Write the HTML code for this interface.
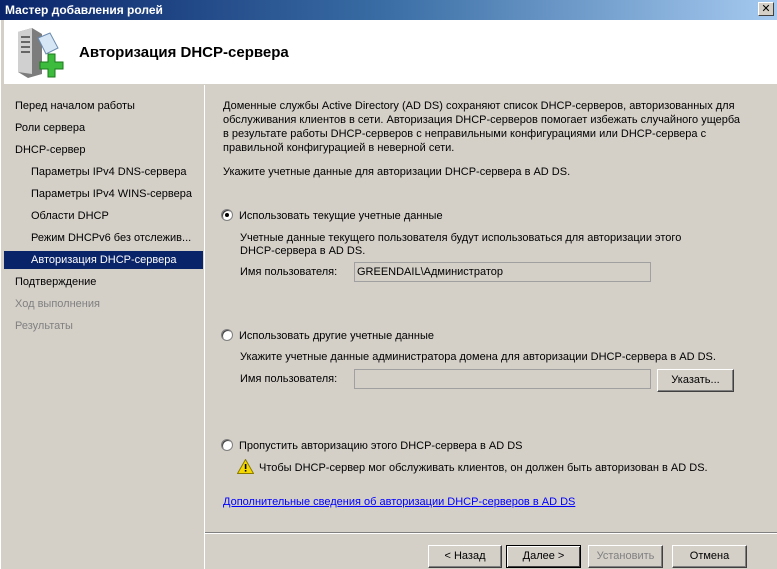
<!DOCTYPE html>
<html><head><meta charset="utf-8"><style>
*{margin:0;padding:0;box-sizing:border-box}
body{width:777px;height:569px;overflow:hidden;background:#d4d0c8;font-family:"Liberation Sans","DejaVu Sans",sans-serif;font-size:11px;color:#000;position:relative}
.abs{position:absolute;white-space:nowrap}
#tb{left:0;top:0;width:777px;height:20px;background:linear-gradient(90deg,#0a246a,#3a6ea5 50%,#a6caf0);}
#tb span{position:absolute;left:5px;top:3px;color:#fff;font-weight:bold;font-size:12px}
#xb{right:3px;top:2px;width:16px;height:14px;background:#d4d0c8;border:1px solid;border-color:#fff #404040 #404040 #fff;text-align:center;font-weight:bold;font-size:11px;line-height:12px}
#hdr{left:4px;top:20px;width:773px;height:64px;background:#fff}
#hdr b{position:absolute;left:75px;top:24px;font-size:15px}
#lp{left:4px;top:85px;width:199px;height:484px;background:#d4d0c8}
.nav{left:15px;font-size:11px}
.sub{left:31px}
.g{color:#808080}
#sel{left:4px;top:251px;width:199px;height:18px;background:#0a246a}
.radio{width:12px;height:12px;border-radius:50%;background:#fff;border:1px solid #808080;box-shadow:inset 1px 1px 0 #404040}
.radio.on::after{content:"";position:absolute;left:3px;top:3px;width:4px;height:4px;border-radius:50%;background:#000}
.tb{height:20px;border:1px solid #a0a0a0;background:#d4d0c8;padding:3px 2px}
.btn{height:23px;border:1px solid;border-color:#fff #404040 #404040 #fff;background:#d4d0c8;text-align:center;line-height:21px;box-shadow:inset -1px -1px 0 #808080}
</style></head><body>
<div class="abs" id="tb"><span>Мастер добавления ролей</span><div class="abs" id="xb">✕</div></div>
<div class="abs" style="left:0;top:20px;width:4px;height:549px;background:#d4d0c8;border-left:1px solid #fff"></div>
<div class="abs" id="hdr">
<svg class="abs" style="left:8px;top:6px" width="52" height="54" viewBox="0 0 52 54">
<polygon points="6,6 20,2 30,8 30,48 16,52 6,46" fill="#7c7c7c"/>
<polygon points="6,6 20,2 20,48 6,46" fill="#d0d0d0"/>
<rect x="9" y="10" width="9" height="2" fill="#666"/><rect x="9" y="15" width="9" height="2" fill="#666"/><rect x="9" y="20" width="9" height="2" fill="#666"/><rect x="9" y="25" width="9" height="2" fill="#666"/>
<polygon points="26,12 38,7 46,22 34,28" fill="#d6e6f5" stroke="#6a8bb0"/>
<path d="M34 34h7v-7h7v7h-0v0" fill="none"/>
<path d="M28 36h8v-8h7v8h8v7h-8v8h-7v-8h-8z" fill="#3dbb3d" stroke="#1a7a1a"/>
</svg><b>Авторизация DHCP-сервера</b></div>
<div class="abs" id="lp"></div>
<div class="abs" id="sel"></div>
<div class="abs nav" style="top:100px">Перед началом работы</div>
<div class="abs nav" style="top:122px">Роли сервера</div>
<div class="abs nav" style="top:144px">DHCP-сервер</div>
<div class="abs nav sub" style="top:166px">Параметры IPv4 DNS-сервера</div>
<div class="abs nav sub" style="top:188px">Параметры IPv4 WINS-сервера</div>
<div class="abs nav sub" style="top:210px">Области DHCP</div>
<div class="abs nav sub" style="top:232px">Режим DHCPv6 без отслежив...</div>
<div class="abs nav sub" style="top:254px;color:#fff">Авторизация DHCP-сервера</div>
<div class="abs nav" style="top:276px">Подтверждение</div>
<div class="abs nav g" style="top:298px">Ход выполнения</div>
<div class="abs nav g" style="top:320px">Результаты</div>
<div class="abs" style="left:203px;top:85px;width:2px;height:484px;background:#fff;border-left:1px solid #d4d0c8"></div>
<div class="abs" style="left:223px;top:99px;line-height:14px">Доменные службы Active Directory (AD DS) сохраняют список DHCP-серверов, авторизованных для<br>обслуживания клиентов в сети. Авторизация DHCP-серверов помогает избежать случайного ущерба<br>в результате работы DHCP-серверов с неправильными конфигурациями или DHCP-сервера с<br>правильной конфигурацией в неверной сети.</div>
<div class="abs" style="left:223px;top:166px">Укажите учетные данные для авторизации DHCP-сервера в AD DS.</div>
<div class="abs radio on" style="left:221px;top:209px"></div>
<div class="abs" style="left:239px;top:210px">Использовать текущие учетные данные</div>
<div class="abs" style="left:240px;top:232px;line-height:13px">Учетные данные текущего пользователя будут использоваться для авторизации этого<br>DHCP-сервера в AD DS.</div>
<div class="abs" style="left:240px;top:266px">Имя пользователя:</div>
<div class="abs tb" style="left:354px;top:262px;width:297px">GREENDAIL\Администратор</div>
<div class="abs radio" style="left:221px;top:329px"></div>
<div class="abs" style="left:239px;top:330px">Использовать другие учетные данные</div>
<div class="abs" style="left:240px;top:351px">Укажите учетные данные администратора домена для авторизации DHCP-сервера в AD DS.</div>
<div class="abs" style="left:240px;top:373px">Имя пользователя:</div>
<div class="abs tb" style="left:354px;top:369px;width:297px"></div>
<div class="abs btn" style="left:657px;top:369px;width:77px">Указать...</div>
<div class="abs radio" style="left:221px;top:439px"></div>
<div class="abs" style="left:239px;top:440px">Пропустить авторизацию этого DHCP-сервера в AD DS</div>
<svg class="abs" style="left:237px;top:459px" width="17" height="15" viewBox="0 0 17 15"><polygon points="8.5,0.5 16.5,14.5 0.5,14.5" fill="#f5d800" stroke="#8a7a00"/><rect x="7.8" y="5" width="1.6" height="5" fill="#000"/><rect x="7.8" y="11" width="1.6" height="1.6" fill="#000"/></svg>
<div class="abs" style="left:259px;top:462px">Чтобы DHCP-сервер мог обслуживать клиентов, он должен быть авторизован в AD DS.</div>
<div class="abs" style="left:223px;top:496px;color:#0000ff;text-decoration:underline">Дополнительные сведения об авторизации DHCP-серверов в AD DS</div>
<div class="abs" style="left:205px;top:532px;width:572px;height:2px;border-top:1px solid #808080;border-bottom:1px solid #fff"></div>
<div class="abs btn" style="left:428px;top:545px;width:74px">&lt; Назад</div>
<div class="abs btn" style="left:506px;top:545px;width:75px;border:1px solid #000;box-shadow:inset 1px 1px 0 #fff,inset -1px -1px 0 #404040">Далее &gt;</div>
<div class="abs btn" style="left:588px;top:545px;width:75px;color:#808080">Установить</div>
<div class="abs btn" style="left:672px;top:545px;width:75px">Отмена</div>
</body></html>
